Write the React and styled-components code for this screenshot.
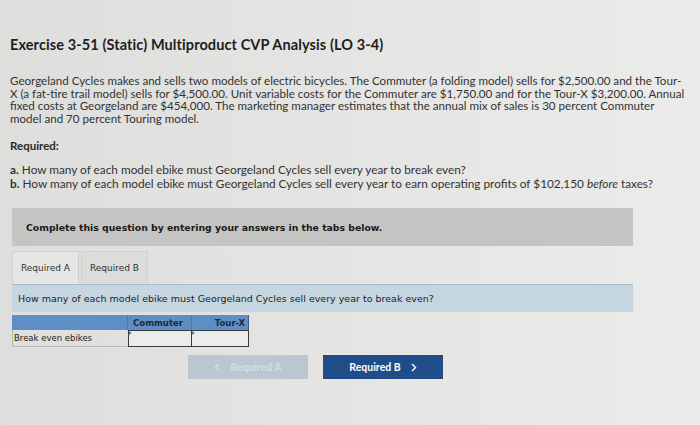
import React from 'react';
import styled, { createGlobalStyle } from 'styled-components';

const GlobalStyle = createGlobalStyle`
  html, body {
    margin: 0;
    padding: 0;
    background: #e3e3e1;
  }
  body {
    width: 700px;
    height: 425px;
    overflow: hidden;
    background: linear-gradient(90deg, #dededc 0%, #e6e6e4 60%, #ebebea 100%);
    font-family: Lato, "Open Sans", sans-serif;
    color: #2a2a2a;
  }
`;

const Page = styled.div`
  padding: 36px 10px 0 10px;
`;

const Title = styled.h1`
  margin: 0;
  font-size: 14.5px;
  font-weight: 700;
  color: #1e1e1e;
  letter-spacing: 0.1px;
`;

const Para = styled.div`
  margin-top: 22px;
  font-size: 11.6px;
  line-height: 12.5px;
  color: #333;
  white-space: nowrap;
`;

const Label = styled.div`
  margin-top: 14px;
  font-size: 11.5px;
  font-weight: 700;
  color: #2a2a2a;
`;

const List = styled.div`
  margin-top: 11px;
  font-size: 11.8px;
  line-height: 13.5px;
  color: #333;
  white-space: nowrap;
`;

const Work = styled.div`
  width: 621px;
  margin: 18px 0 0 2px;
  font-family: "DejaVu Sans", Verdana, sans-serif;
`;

const Banner = styled.div`
  background: #c4c4c2;
  height: 38px;
  display: flex;
  align-items: center;
  padding-left: 14px;
  font-size: 9.3px;
  font-weight: 700;
  color: #1a1a1a;
`;

const Tabs = styled.div`
  display: flex;
  gap: 2px;
  margin-top: 5px;
`;

const Tab = styled.div`
  width: 67px;
  height: 33px;
  display: flex;
  align-items: center;
  justify-content: center;
  font-size: 9px;
  color: #333;
  background: ${p => (p.active ? '#e6e6e4' : '#dcdcda')};
  border: 1px solid #cfcfcd;
  border-bottom: none;
  box-sizing: border-box;
`;

const Prompt = styled.div`
  height: 27px;
  background: #c6d6e0;
  border-top: 1px solid #a9bccb;
  display: flex;
  align-items: center;
  padding-left: 6px;
  font-size: 9.5px;
  color: #222;
`;

const Table = styled.div`
  margin-top: 3px;
  display: grid;
  grid-template-columns: 116px 64px 57px;
  width: 237px;
  font-size: 8.5px;
`;

const Head = styled.div`
  height: 15px;
  background: #5d8ec4;
  color: #1b2a3c;
  font-weight: 700;
  display: flex;
  align-items: center;
  justify-content: ${p => (p.center ? 'center' : 'flex-end')};
  padding-right: 3px;
  border-right: ${p => (p.last ? '1px solid #3d5c80' : '1px solid #4c77a6')};
  box-sizing: border-box;
`;

const RowLabel = styled.div`
  height: 17px;
  display: flex;
  align-items: center;
  padding-left: 1px;
  color: #222;
  border-left: 1px solid #b8b8b8;
  border-bottom: 1px solid #b8b8b8;
  box-sizing: border-box;
`;

const Cell = styled.div`
  position: relative;
  height: 17px;
  background: #ececea;
  border: 1px solid #3b3b3b;
  border-left: ${p => (p.first ? '1px solid #3b3b3b' : 'none')};
  box-sizing: border-box;

  &::before {
    content: '';
    position: absolute;
    left: 0;
    top: 0;
    border-left: 3px solid #5a7da8;
    border-top: 2px solid transparent;
    border-bottom: 2px solid transparent;
  }
`;

const Nav = styled.div`
  display: flex;
  gap: 15px;
  margin: 8px 0 0 176px;
  font-family: Lato, "Open Sans", sans-serif;
`;

const NavButton = styled.div`
  width: 120px;
  height: 24px;
  display: flex;
  align-items: center;
  justify-content: center;
  gap: 10px;
  font-size: 10.5px;
  font-weight: 700;
  background: ${p => (p.disabled ? '#bcc6d0' : '#1f4d8a')};
  color: ${p => (p.disabled ? '#d6dde4' : '#ffffff')};
`;

const Chevron = ({ dir }) => (
  <svg width="6" height="9" viewBox="0 0 6 9">
    <path
      d={dir === 'left' ? 'M5 1 L1.5 4.5 L5 8' : 'M1 1 L4.5 4.5 L1 8'}
      fill="none"
      stroke="currentColor"
      strokeWidth="1.4"
    />
  </svg>
);

const lines = [
  'Georgeland Cycles makes and sells two models of electric bicycles. The Commuter (a folding model) sells for $2,500.00 and the Tour-',
  'X (a fat-tire trail model) sells for $4,500.00. Unit variable costs for the Commuter are $1,750.00 and for the Tour-X $3,200.00. Annual',
  'fixed costs at Georgeland are $454,000. The marketing manager estimates that the annual mix of sales is 30 percent Commuter',
  'model and 70 percent Touring model.',
];

export default function App() {
  return (
    <>
      <GlobalStyle />
      <Page>
        <Title>Exercise 3-51 (Static) Multiproduct CVP Analysis (LO 3-4)</Title>
        <Para>
          {lines.map(l => (
            <div key={l}>{l}</div>
          ))}
        </Para>
        <Label>Required:</Label>
        <List>
          <div><b>a.</b> How many of each model ebike must Georgeland Cycles sell every year to break even?</div>
          <div><b>b.</b> How many of each model ebike must Georgeland Cycles sell every year to earn operating profits of $102,150 <i>before</i> taxes?</div>
        </List>
        <Work>
          <Banner>Complete this question by entering your answers in the tabs below.</Banner>
          <Tabs>
            <Tab active>Required A</Tab>
            <Tab>Required B</Tab>
          </Tabs>
          <Prompt>How many of each model ebike must Georgeland Cycles sell every year to break even?</Prompt>
          <Table>
            <Head />
            <Head center>Commuter</Head>
            <Head last>Tour-X</Head>
            <RowLabel>Break even ebikes</RowLabel>
            <Cell first />
            <Cell />
          </Table>
          <Nav>
            <NavButton disabled><Chevron dir="left" />Required A</NavButton>
            <NavButton>Required B<Chevron dir="right" /></NavButton>
          </Nav>
        </Work>
      </Page>
    </>
  );
}
